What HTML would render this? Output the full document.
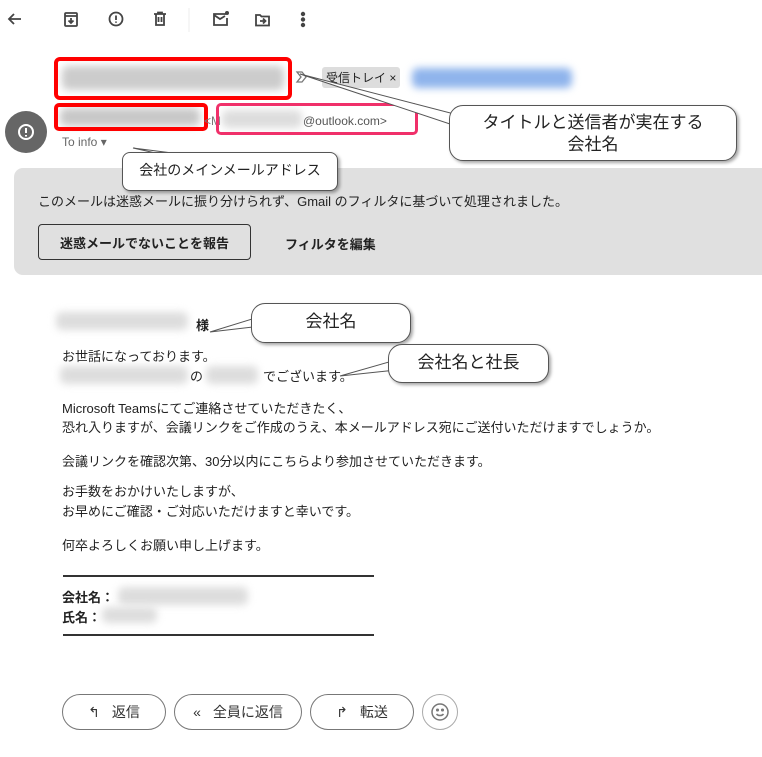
<!DOCTYPE html>
<html><head><meta charset="utf-8"><style>
body{margin:0;width:762px;height:757px;background:#fff;font-family:"Liberation Sans","Noto Sans CJK JP",sans-serif;color:#222;position:relative;overflow:hidden}
.a{position:absolute}
.blur{position:absolute;background:#c8c8c8;filter:blur(4px);border-radius:6px}
.call{position:absolute;background:#fff;border:1px solid #555;border-radius:14px;box-shadow:2px 2px 3px rgba(0,0,0,.35);text-align:center;color:#222}
.t{position:absolute;font-size:13px;white-space:nowrap}
.btn{position:absolute;border:1px solid #777;border-radius:18px;height:34px;font-size:14px;display:flex;align-items:center;justify-content:center;gap:12px;color:#333}
</style></head><body>
<!-- toolbar -->
<svg class="a" style="left:0;top:0" width="330" height="40" fill="none" stroke="#444" stroke-width="1.8">
<path d="M21 19H9M14 14l-5 5 5 5"/>
<rect x="65" y="13" width="12" height="13" rx="1"/><path d="M65 16h12M71 18v5M68.5 20.5 71 23l2.5-2.5"/>
<circle cx="116" cy="19" r="6.5"/><path d="M116 15.5v4.5M116 21.5v1.2"/>
<path d="M154 14h12M158 14v-1.5h4V14M156 14v11h8V14M158.5 17v5M161.5 17v5"/>
<path d="M189 8v24" stroke="#eee" stroke-width="1"/>
<path d="M226 14h-12v11h13v-7M214 15l6 4 5-3"/><circle cx="227" cy="13" r="2" fill="#444" stroke="none"/>
<path d="M256 15h4l1.5 1.5h7.5v9h-13zM260 21h5M263 18.5l2.5 2.5-2.5 2.5"/>
<circle cx="303" cy="14" r="1.3" fill="#444"/><circle cx="303" cy="19.5" r="1.3" fill="#444"/><circle cx="303" cy="25" r="1.3" fill="#444"/>
</svg>
<!-- subject -->
<div class="blur" style="left:62px;top:66px;width:222px;height:24px;background:#ccc"></div>
<div class="a" style="left:54px;top:57px;width:230px;height:35px;border:4px solid #f00;border-radius:6px"></div>
<svg class="a" style="left:294px;top:69px" width="16" height="16" fill="none" stroke="#777" stroke-width="1.3"><path d="M3 3h5l4 5-4 5H3l4-5z"/></svg>
<div class="t" style="left:322px;top:67px;background:#ddd;padding:2px 4px;font-size:12px;border-radius:3px">受信トレイ ×</div>
<div class="blur" style="left:412px;top:68px;width:160px;height:20px;background:#8fb4ec"></div>
<!-- sender -->
<div class="a" style="left:5px;top:111px;width:42px;height:42px;border-radius:50%;background:#666"></div>
<svg class="a" style="left:15px;top:121px" width="22" height="22" fill="none" stroke="#fff" stroke-width="2"><circle cx="11" cy="11" r="7"/><path d="M11 7v5M11 14v1.5"/></svg>
<div class="blur" style="left:60px;top:108px;width:140px;height:18px"></div>
<div class="a" style="left:54px;top:103px;width:146px;height:20px;border:4px solid #f00;border-radius:5px"></div>
<div class="t" style="left:204px;top:114px;font-size:12px;color:#777">&lt;M</div>
<div class="blur" style="left:222px;top:110px;width:80px;height:18px;background:#ddd"></div>
<div class="t" style="left:303px;top:114px;font-size:12px;color:#555">@outlook.com&gt;</div>
<div class="a" style="left:216px;top:103px;width:196px;height:26px;border:3px solid #f0306a;border-radius:5px"></div>
<div class="t" style="left:62px;top:135px;font-size:12px;color:#666">To info ▾</div>
<!-- banner -->
<div class="a" style="left:14px;top:168px;width:760px;height:107px;background:#e0e0e0;border-radius:9px"></div>
<div class="t" style="left:38px;top:191px">このメールは迷惑メールに振り分けられず、Gmail のフィルタに基づいて処理されました。</div>
<div class="a" style="left:38px;top:224px;width:211px;height:34px;border:1px solid #333;border-radius:4px;font-size:13px;font-weight:bold;display:flex;align-items:center;justify-content:center">迷惑メールでないことを報告</div>
<div class="t" style="left:285px;top:234px;font-weight:bold">フィルタを編集</div>
<!-- callouts top -->
<svg class="a" style="left:0;top:0" width="762" height="200">
<path d="M300 74 L462 116 L462 128Z" fill="#fff" stroke="#555"/>
<path d="M133 148 L180 154 L160 154Z" fill="#fff" stroke="#555"/>
</svg>
<div class="call" style="left:449px;top:105px;width:288px;height:56px;font-size:17px;line-height:22px;padding-top:6px;box-sizing:border-box">タイトルと送信者が実在する<br>会社名</div>
<div class="call" style="left:122px;top:152px;width:214px;height:37px;font-size:14px;line-height:35px;border-radius:8px">会社のメインメールアドレス</div>
<!-- body -->
<div class="blur" style="left:56px;top:312px;width:132px;height:18px;background:#ddd"></div>
<div class="t" style="left:196px;top:315px;font-weight:bold">様</div>
<div class="t" style="left:62px;top:346px">お世話になっております。</div>
<div class="blur" style="left:60px;top:366px;width:128px;height:18px;background:#ddd"></div>
<div class="t" style="left:190px;top:366px">の</div>
<div class="blur" style="left:206px;top:366px;width:52px;height:18px;background:#ddd"></div>
<div class="t" style="left:263px;top:366px">でございます。</div>
<svg class="a" style="left:0;top:290px" width="762" height="100">
<path d="M210 42 L262 26 L262 36Z" fill="#fff" stroke="#555"/>
<path d="M340 86 L396 70 L396 80Z" fill="#fff" stroke="#555"/>
</svg>
<div class="call" style="left:251px;top:303px;width:158px;height:38px;font-size:17px;line-height:36px">会社名</div>
<div class="call" style="left:388px;top:344px;width:159px;height:37px;font-size:17px;line-height:35px">会社名と社長</div>
<div class="t" style="left:62px;top:399px;line-height:19px">Microsoft Teamsにてご連絡させていただきたく、<br>恐れ入りますが、会議リンクをご作成のうえ、本メールアドレス宛にご送付いただけますでしょうか。</div>
<div class="t" style="left:62px;top:451px">会議リンクを確認次第、30分以内にこちらより参加させていただきます。</div>
<div class="t" style="left:62px;top:482px;line-height:20px">お手数をおかけいたしますが、<br>お早めにご確認・ご対応いただけますと幸いです。</div>
<div class="t" style="left:62px;top:535px">何卒よろしくお願い申し上げます。</div>
<div class="a" style="left:63px;top:575px;width:311px;height:2px;background:#333"></div>
<div class="t" style="left:62px;top:587px;font-weight:bold">会社名：</div>
<div class="blur" style="left:118px;top:587px;width:130px;height:18px;background:#ddd"></div>
<div class="t" style="left:62px;top:607px;font-weight:bold">氏名：</div>
<div class="blur" style="left:102px;top:607px;width:55px;height:16px;background:#ddd"></div>
<div class="a" style="left:63px;top:634px;width:311px;height:2px;background:#333"></div>
<!-- buttons -->
<div class="btn" style="left:62px;top:694px;width:102px"><span>↰</span><span>返信</span></div>
<div class="btn" style="left:174px;top:694px;width:126px"><span>«</span><span>全員に返信</span></div>
<div class="btn" style="left:310px;top:694px;width:102px"><span>↱</span><span>転送</span></div>
<div class="a" style="left:422px;top:694px;width:34px;height:34px;border:1px solid #aaa;border-radius:50%"></div>
<svg class="a" style="left:429px;top:701px" width="22" height="22" fill="none" stroke="#777" stroke-width="1.5"><circle cx="11" cy="11" r="8"/><path d="M7.5 13c1.5 2 5.5 2 7 0"/><circle cx="8.5" cy="9" r=".8" fill="#777"/><circle cx="13.5" cy="9" r=".8" fill="#777"/></svg>
</body></html>
